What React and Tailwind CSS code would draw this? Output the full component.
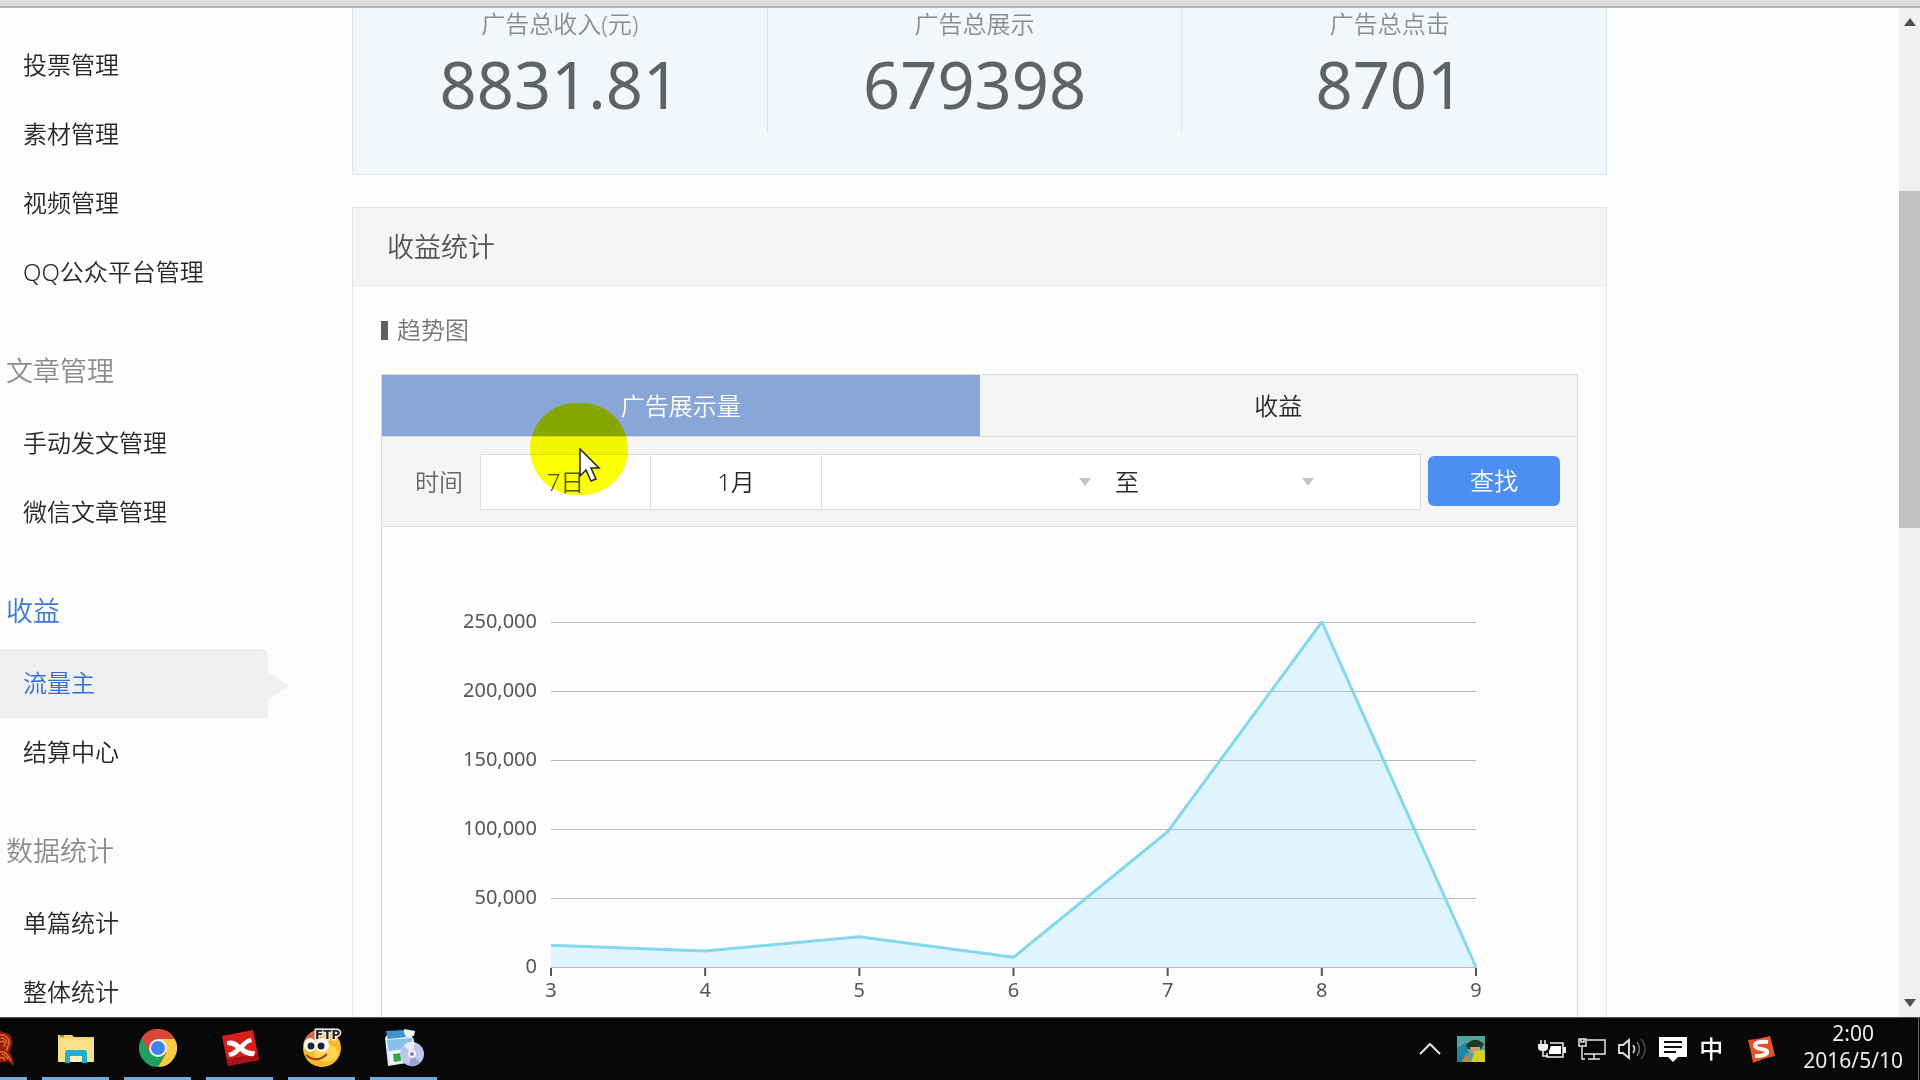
import React, { useState } from 'react';

const NAV = [
    {
        title: null,
        items: ['投票管理', '素材管理', '视频管理', 'QQ公众平台管理'],
    },
    {
        title: '文章管理',
        items: ['手动发文管理', '微信文章管理'],
    },
    {
        title: '收益',
        active: true,
        items: ['流量主', '结算中心'],
    },
    {
        title: '数据统计',
        items: ['单篇统计', '整体统计'],
    },
];

const STATS = [
    { label: '广告总收入(元)', value: '8831.81' },
    { label: '广告总展示', value: '679398' },
    { label: '广告总点击', value: '8701' },
];

const TABS = ['广告展示量', '收益'];

const TREND = [
    { day: 3, value: 15800 },
    { day: 4, value: 11600 },
    { day: 5, value: 22000 },
    { day: 6, value: 7000 },
    { day: 7, value: 98000 },
    { day: 8, value: 250000 },
    { day: 9, value: 0 },
];

const Sidebar = () => {
    const current = '流量主';
    return (
        <nav className="w-[352px] shrink-0 pt-[23px] text-2xl text-[#282828]">
            {NAV.map((group, g) => (
                <div key={g}>
                    {group.title && (
                        <h2
                            className={`mt-7 mb-0.5 h-[72px] pl-1.5 flex items-center text-[27px] ${
                                group.active ? 'text-[#3b78dc]' : 'text-[#8c8c8c]'
                            }`}
                        >
                            {group.title}
                        </h2>
                    )}
                    <ul>
                        {group.items.map(item => (
                            <li key={item} className="flex items-center">
                                <a
                                    href="#"
                                    className={`w-[268px] h-[69px] pl-[23px] pb-0.5 flex items-center ${
                                        item === current ? 'bg-[#f0f0f0] text-[#2f6edb] rounded-tr-md' : ''
                                    }`}
                                >
                                    {item}
                                </a>
                                {item === current && (
                                    <svg width="21" height="28" viewBox="0 0 21 28" className="mt-1">
                                        <path d="M0 0 L21 14 L0 28 Z" fill="#f0f0f0" />
                                    </svg>
                                )}
                            </li>
                        ))}
                    </ul>
                </div>
            ))}
        </nav>
    );
};

const StatsPanel = () => (
    <section className="flex pb-[42px] bg-[#f2f7fc] border border-t-0 border-[#dfe5ea]">
        {STATS.map((stat, i) => (
            <div
                key={stat.label}
                className={`w-[33.1%] text-center ${i < 2 ? 'border-r border-[#dfe4e8]' : ''}`}
            >
                <div className="h-8 text-2xl leading-8 text-[#8c8c8c]">{stat.label}</div>
                <div className="h-[92px] text-[65px] leading-[88px] font-normal text-[#606366]">{stat.value}</div>
            </div>
        ))}
    </section>
);

const DateSelect = ({ label, className }) => (
    <div className={`relative h-full ${className}`}>
        <select aria-label={label} className="w-full h-full appearance-none bg-transparent outline-none">
            <option value=""></option>
        </select>
        <svg width="12" height="8" viewBox="0 0 12 8" className="absolute right-0 top-1/2 -translate-y-1/2 pointer-events-none">
            <path d="M0 0 H12 L6 8 Z" fill="#c4c4c4" />
        </svg>
    </div>
);

// Yellow click halo with the arrow on top of it
const Pointer = () => (
    <>
        <div className="absolute left-[148px] top-7 w-[98px] h-[92px] rounded-full bg-[#fbff00] mix-blend-multiply pointer-events-none"></div>
        <svg width="22" height="36" viewBox="0 0 22 36" className="absolute left-[197px] top-[73px] pointer-events-none">
            <path d="M1 1 V28 L7 22 L12 33 L17 31 L12 20 H20 Z" fill="#fff" stroke="#222" strokeWidth="1.5" />
        </svg>
    </>
);

const TrendChart = () => {
    const left = 169;
    const right = 1094;
    const base = 440;
    const unit = 69;
    const step = (right - left) / (TREND.length - 1);
    const points = TREND.map((d, i) => [left + i * step, base - (d.value / 50000) * unit]);
    const line = points.map(p => p.join(',')).join(' ');

    return (
        <svg viewBox="0 0 1195 520" className="w-full h-auto block font-normal" role="img" aria-label="趋势图">
            {[0, 1, 2, 3, 4, 5].map(n => (
                <g key={n}>
                    <rect x={left} y={base - n * unit} width={right - left} height="1" fill="#b8b8b8" />
                    <text x={left - 14} y={base + 6 - n * unit} textAnchor="end" fontSize="20" fill="#555">
                        {(n * 50000).toLocaleString('en-US')}
                    </text>
                </g>
            ))}
            <polygon points={`${left},${base} ${line} ${right},${base}`} fill="#9ce2fb" fillOpacity="0.3" />
            <polyline points={line} fill="none" stroke="#84d8ec" strokeWidth="3" strokeLinejoin="round" />
            {TREND.map((d, i) => (
                <g key={d.day}>
                    <rect x={left + i * step - 1} y={base + 1} width="2" height="8" fill="#555" />
                    <text x={left + i * step} y={base + 30} textAnchor="middle" fontSize="20" fill="#555">
                        {d.day}
                    </text>
                </g>
            ))}
        </svg>
    );
};

const TrendPanel = () => {
    const [tab, setTab] = useState(TABS[0]);
    return (
        <section className="mt-8 border border-[#e6e6e6]">
            <h1 className="h-[78px] pt-0.5 pl-[34px] flex items-center bg-[#f5f5f5] border-b border-[#e6e6e6] text-[27px] text-[#555]">
                收益统计
            </h1>
            <div className="px-7">
                <h3 className="h-[88px] flex items-center gap-[9px] text-2xl text-[#777]">
                    <span className="w-[7px] h-[19px] bg-[#606060]"></span>
                    趋势图
                </h3>
                <div className="relative border border-[#d9d9d9]">
                    <div className="flex border-b border-[#dcdcdc] bg-[#f5f5f5]">
                        {TABS.map(name => (
                            <button
                                key={name}
                                type="button"
                                onClick={() => setTab(name)}
                                className={`flex-1 h-[61px] text-2xl ${
                                    tab === name ? 'bg-[#88a7d8] text-white' : 'text-[#282828]'
                                }`}
                            >
                                {name}
                            </button>
                        ))}
                    </div>
                    <form className="h-[90px] pl-[33px] pr-[17px] flex items-center bg-[#f5f5f6] border-b border-[#dcdcdc] text-2xl text-[#282828]">
                        <span className="mr-[17px] text-[#666]">时间</span>
                        <div className="flex-1 h-14 mr-[7px] flex items-center bg-white border border-[#dcdcdc]">
                            <button type="button" className="w-[170px] h-full border-r border-[#dcdcdc] text-[#555]">7日</button>
                            <button type="button" className="w-[171px] h-full border-r border-[#dcdcdc]">1月</button>
                            <DateSelect label="开始日期" className="w-[269px]" />
                            <span className="mx-6">至</span>
                            <DateSelect label="结束日期" className="w-[151px]" />
                        </div>
                        <button type="button" className="w-[132px] h-[50px] mb-0.5 rounded-md bg-[#4c8ef2] text-white">
                            查找
                        </button>
                    </form>
                    <TrendChart />
                    <Pointer />
                </div>
            </div>
        </section>
    );
};

const Scrollbar = () => (
    <div className="w-[21px] shrink-0 flex flex-col items-center bg-[#f0f0f0]">
        <svg width="12" height="8" viewBox="0 0 12 8" className="mt-2.5 mb-1 shrink-0">
            <path d="M6 0 L12 8 H0 Z" fill="#505050" />
        </svg>
        <div className="w-full h-[16%]"></div>
        <div className="w-full h-1/3 bg-[#c1c1c1]"></div>
        <svg width="12" height="8" viewBox="0 0 12 8" className="mt-auto mb-2.5 shrink-0">
            <path d="M0 0 H12 L6 8 Z" fill="#505050" />
        </svg>
    </div>
);

const FlameIcon = () => (
    <svg width="14" height="36" viewBox="0 0 14 36">
        <path d="M0 1 C4 3 7 2 11 6 C12 9 13 12 12 16 C10 18 11 20 9 22 C12 25 14 31 14 35 C10 34 8 30 6 32 C4 33 2 31 0 33 Z" fill="#8f1e0b" />
        <path d="M0 5 C4 4 8 7 9 11 C10 15 6 17 7 21 M0 12 C4 10 6 13 4 17 M0 22 C4 20 8 25 11 31 M0 28 C2 27 4 28 5 30" fill="none" stroke="#e4602a" strokeWidth="1.8" />
        <path d="M1 8 C4 7 6 10 7 13 M2 24 C4 24 6 27 8 29" fill="none" stroke="#ffb469" strokeWidth="1" />
    </svg>
);

const FolderIcon = () => (
    <svg width="38" height="36" viewBox="0 0 38 36">
        <path d="M1 5 H15 L17 7 H37 V32 H1 Z" fill="#f3d368" />
        <path d="M1 9 H37 V32 H1 Z" fill="#fbe08a" />
        <path d="M3 6 H7" stroke="#5c7a3a" strokeWidth="1.5" />
        <path d="M8 33 V23 Q8 20 11 20 H27 Q30 20 30 23 V33 H25 V26 H13 V33 Z" fill="#22aed0" />
        <path d="M13 26 H25 V32 H13 Z" fill="#fff0b8" />
    </svg>
);

const ChromeIcon = () => (
    <svg width="38" height="38" viewBox="0 0 38 38">
        <path d="M19 19 L2.5 9.5 A19 19 0 0 1 35.5 9.5 Z" fill="#d9473c" />
        <path d="M19 19 L2.5 9.5 A19 19 0 0 0 19 38 L27 24 Z" fill="#1fa05c" />
        <path d="M19 19 L27.2 23.7 L19 38 A19 19 0 0 0 35.5 9.5 L19 9.5 Z" fill="#fccd43" />
        <path d="M19 10 H35.6 A19 19 0 0 0 2.5 9.5 L10.8 23.8 Z" fill="#d9473c" />
        <circle cx="19" cy="19" r="9" fill="#f4f4f4" />
        <circle cx="19" cy="19" r="7" fill="#4181ee" />
    </svg>
);

const XMindIcon = () => (
    <svg width="38" height="38" viewBox="0 0 38 38">
        <path d="M1 7 L32 1 L38 31 L7 37 Z" fill="#d81f1c" />
        <path d="M6 30 L37 25 L38 31 L7 37 Z" fill="#a81210" />
        <path d="M6 12 Q13 10 19 16 Q24 10 30 9 L31 13 Q26 14 23 19 Q28 23 34 22 L33 27 Q25 28 19 22 Q15 27 9 28 L7 24 Q12 23 15 19 Q11 16 6 16 Z" fill="#fff" />
    </svg>
);

const FtpIcon = () => (
    <svg width="42" height="40" viewBox="0 0 42 40">
        <circle cx="21" cy="20" r="19" fill="#f9b92a" />
        <ellipse cx="25" cy="25" rx="12" ry="9" fill="#ffd452" />
        <path d="M2 18 Q3 6 16 2 L20 10 L8 14 Z" fill="#d9694a" />
        <ellipse cx="9" cy="17" rx="6" ry="7" fill="#fff" />
        <ellipse cx="21" cy="17" rx="7" ry="7" fill="#fff" />
        <circle cx="10" cy="18" r="3.5" fill="#20242c" />
        <circle cx="20" cy="18" r="3.5" fill="#20242c" />
        <path d="M5 27 Q16 36 26 26" fill="none" stroke="#a5421a" strokeWidth="2" />
        <text x="14" y="11" fontSize="12" fontWeight="700" fill="#222" stroke="#eee" strokeWidth="3" paintOrder="stroke" fontFamily="DejaVu Sans, sans-serif">FTP</text>
    </svg>
);

const InstallerIcon = () => (
    <svg width="42" height="40" viewBox="0 0 42 40">
        <path d="M2 10 L6 4 L26 2 L31 12 L30 34 L5 38 Z" fill="#dcebf3" />
        <path d="M3 3 L20 2 L23 9 L5 11 Z" fill="#3f93cd" />
        <path d="M4 12 L29 10 L28 20 L6 23 Z" fill="#84c0e8" />
        <path d="M6 24 L20 22 V34 L7 36 Z" fill="#f2f8fa" />
        <path d="M10 26 L18 25 V33 L11 34 Z" fill="#35a548" />
        <path d="M21 1 L32 3 L31 8 L22 7 Z" fill="#eef4f8" />
        <circle cx="29" cy="26" r="12" fill="#c3c6ec" />
        <path d="M29 26 L21 17 A12 12 0 0 1 32 14 Z" fill="#ecedfb" />
        <path d="M29 26 L37 35 A12 12 0 0 1 26 38 Z" fill="#9ba0da" />
        <circle cx="29" cy="26" r="4" fill="#f5f5ff" />
        <circle cx="29" cy="26" r="2" fill="#7d83c4" />
    </svg>
);

const APPS = [
    { name: '文件资源管理器', icon: <FolderIcon /> },
    { name: 'Chrome', icon: <ChromeIcon /> },
    { name: 'XMind', icon: <XMindIcon /> },
    { name: 'FlashFXP', icon: <FtpIcon /> },
    { name: '安装程序', icon: <InstallerIcon /> },
];

const TrayIcons = () => (
    <div className="flex items-center text-white">
        <svg width="22" height="12" viewBox="0 0 22 12" className="mr-4">
            <path d="M1 11 L11 1 L21 11" fill="none" stroke="#e6e6e6" strokeWidth="2" />
        </svg>
        <svg width="28" height="26" viewBox="0 0 28 26" className="mr-[53px]">
            <rect width="28" height="26" fill="#4fa3a3" />
            <path d="M0 12 L10 6 L12 26 H0 Z" fill="#1f86a8" />
            <path d="M9 9 Q18 -1 27 8 L24 13 H11 Z" fill="#243a26" />
            <path d="M13 11 H23 V17 H14 Z" fill="#c8a070" />
            <path d="M14 26 L18 15 L28 14 V26 Z" fill="#d6cf2c" />
            <path d="M4 26 L10 17 L14 26 Z" fill="#b98a3c" />
        </svg>
        <svg width="28" height="20" viewBox="0 0 28 20" className="mr-3">
            <path d="M3 1 V5 M7 1 V5" fill="none" stroke="#f0f0f0" strokeWidth="1.5" />
            <path d="M0 5 H10 V8 Q10 12 6 12 H4 Q0 12 0 8 Z" fill="#f0f0f0" />
            <path d="M5 11 V17 H10" fill="none" stroke="#f0f0f0" strokeWidth="1.5" />
            <path d="M12 4 H25 V18 H9 V14" fill="none" stroke="#f0f0f0" strokeWidth="1.5" />
            <path d="M13 7 H23 V15 H11 V12 Z" fill="#fff" />
            <rect x="25" y="8" width="3" height="6" fill="#f0f0f0" />
        </svg>
        <svg width="28" height="22" viewBox="0 0 28 22" className="mr-3">
            <path d="M9 2 H27 V16 H6 M16 16 V21 M10 21 H22 M4 9 V21 H7" fill="none" stroke="#e6e6e6" strokeWidth="1.5" />
            <path d="M1 1 H8 V8 H1 Z M3 1 V4 H6 V1" fill="none" stroke="#e6e6e6" strokeWidth="1.5" />
        </svg>
        <svg width="29" height="24" viewBox="0 0 29 24" className="mr-3">
            <path d="M1 8 H5 L11 3 V21 L5 16 H1 Z" fill="none" stroke="#e6e6e6" strokeWidth="1.8" />
            <path d="M15 8 Q18 12 15 16" fill="none" stroke="#d0d0d0" strokeWidth="1.8" />
            <path d="M19 5 Q24 12 19 19" fill="none" stroke="#777" strokeWidth="1.5" />
            <path d="M23 2 Q31 12 23 22" fill="none" stroke="#4a4a4a" strokeWidth="1.5" />
        </svg>
        <svg width="28" height="26" viewBox="0 0 28 26" className="mr-3">
            <path d="M0 1 H28 V21 H19 L14 26 L9 21 H0 Z" fill="#fff" />
            <path d="M5 6 H23 M5 11 H23 M5 16 H17" stroke="#111" strokeWidth="2" />
        </svg>
        <span className="mr-6 text-2xl font-medium">中</span>
        <svg width="28" height="27" viewBox="0 0 28 27" className="mr-7">
            <path d="M1 4 Q12 3 23 0 Q26 10 28 20 Q17 22 6 27 Q4 15 1 4 Z" fill="#e4532a" />
            <path d="M21 6 Q9 5 8 9 Q8 12 14 13 Q21 14 20 17 Q18 20 8 20" fill="none" stroke="#fff" strokeWidth="4" />
        </svg>
    </div>
);

const Taskbar = () => (
    <footer className="h-[63px] shrink-0 flex justify-between bg-[#080808] border-t border-[#555] font-normal">
        <div className="flex gap-[15px]">
            <button type="button" aria-label="游戏" className="w-[27px] flex items-center border-b-[3px] border-[#76acd9]">
                <FlameIcon />
            </button>
            {APPS.map(app => (
                <button
                    key={app.name}
                    type="button"
                    aria-label={app.name}
                    className="w-[67px] flex items-center justify-center border-b-[3px] border-[#76acd9]"
                >
                    {app.icon}
                </button>
            ))}
        </div>
        <div className="flex">
            <TrayIcons />
            <div className="pr-[15px] pb-1 flex flex-col justify-center text-center text-[21px] leading-[27px] text-[#ececec]">
                <span>2:00</span>
                <span>2016/5/10</span>
            </div>
            <div className="w-0.5 border-l border-[#666]"></div>
        </div>
    </footer>
);

const App = () => {
    return (
        <div className="h-screen flex flex-col bg-[#fdfdfd] font-['Noto_Sans','Noto_Sans_CJK_SC',sans-serif] font-[350]">
            <div className="h-2 shrink-0 bg-[#dedede] border-b-2 border-[#b4b4b4]"></div>
            <div className="flex-1 min-h-0 flex overflow-hidden">
                <Sidebar />
                <main className="flex-1 min-w-0 mr-[292px]">
                    <StatsPanel />
                    <TrendPanel />
                </main>
                <Scrollbar />
            </div>
            <Taskbar />
        </div>
    );
};

export default App;
